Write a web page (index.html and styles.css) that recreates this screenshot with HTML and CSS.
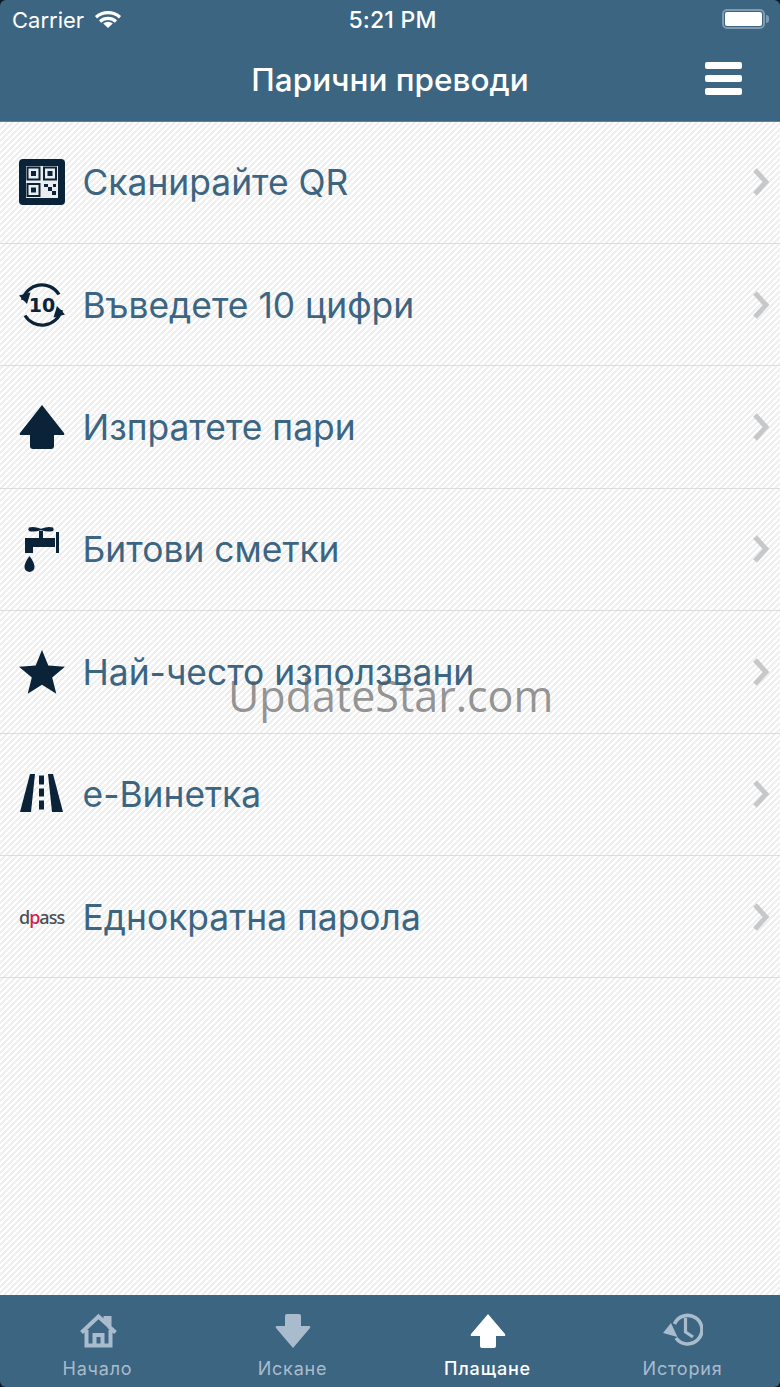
FILE: index.html
```html
<!DOCTYPE html>
<html lang="bg">
<head>
  <meta charset="UTF-8">
  <title>Парични преводи</title>
  <link rel="stylesheet" href="styles.css">
</head>
<body>

  <div class="app">
    <header class="top">
      <div class="status">
        <div class="status-left">
          <span>Carrier</span>
          <svg class="wifi" viewBox="0 0 28 20" width="28" height="20">
            <path d="M14 19 9.200 14.600a7 7 0 0 1 9.600 0z" fill="#fff"/>
            <path d="M2 8.200a18 18 0 0 1 24 0M6 12.500a12 12 0 0 1 16 0" fill="none" stroke="#fff" stroke-width="3.200"/>
          </svg>
        </div>
        <div class="status-time">5:21 PM</div>
        <div class="battery"><div class="battery-fill"></div></div>
      </div>
      <div class="nav">
        <h1>Парични преводи</h1>
        <div class="burger"><span></span><span></span><span></span></div>
      </div>
    </header>

    <main class="list">
      <a class="row">
        <svg class="icon" viewBox="0 0 46 46">
          <rect x="0" y="0" width="46" height="46" rx="4" fill="#0a2338"/>
          <rect x="7" y="7" width="32" height="32" fill="#e9edf0"/>
          <path d="M8.500 8.500h12v12h-12zM25 8.500h12v12H25zM8.500 25h12v12h-12z" fill="none" stroke="#0a2338" stroke-width="2"/>
          <path d="M12 12h5v5h-5zM28.500 12h5v5h-5zM12 28.500h5v5h-5zM25 25h4v3h-4zM29 28h4v4h-4zM33 32h4v4h-4zM34 25h3v3h-3z" fill="#0a2338"/>
        </svg>
        <span class="label">Сканирайте QR</span>
        <svg class="chev" viewBox="0 0 18 30"><path d="M3 3l11 12L3 27" fill="none" stroke="#c6c8ca" stroke-width="5"/></svg>
      </a>
      <a class="row">
        <svg class="icon" viewBox="0 0 46 46">
          <path d="M3.500 18A20 20 0 0 1 40 12.500M42.500 28A20 20 0 0 1 6 33.500" fill="none" stroke="#0a2338" stroke-width="3.200"/>
          <path d="M0 13.500l8 8.500 3.500-11.500zM46 32.500l-8-8.500-3.500 11.500z" fill="#0a2338"/>
          <text class="ten" x="23" y="30">10</text>
        </svg>
        <span class="label">Въведете 10 цифри</span>
        <svg class="chev" viewBox="0 0 18 30"><path d="M3 3l11 12L3 27" fill="none" stroke="#c6c8ca" stroke-width="5"/></svg>
      </a>
      <a class="row">
        <svg class="icon" viewBox="0 0 46 46">
          <path d="M23 1 45 29q1 2-1 2H35v11q0 3-3 3H14q-3 0-3-3V31H2q-2 0-1-2z" fill="#0a2338"/>
        </svg>
        <span class="label">Изпратете пари</span>
        <svg class="chev" viewBox="0 0 18 30"><path d="M3 3l11 12L3 27" fill="none" stroke="#c6c8ca" stroke-width="5"/></svg>
      </a>
      <a class="row">
        <svg class="icon" viewBox="0 0 46 46">
          <path d="M20 5h4v8h-4z" fill="#0a2338"/>
          <path d="M10 1.500q5-1.500 12 1.200 7-2.700 12-1.200 1.500 2 0 3.500-5 1.500-12-.800-7 2.300-12 .800-1.500-1.500 0-3.500z" fill="#0a2338"/>
          <path d="M6 12h30v9H14v6H6z" fill="#0a2338"/>
          <path d="M37 6h3v21h-3z" fill="#0a2338"/>
          <path d="M10.500 30q5 6.500 5 11a5 5 0 0 1-10 0q0-4.500 5-11z" fill="#0a2338"/>
        </svg>
        <span class="label">Битови сметки</span>
        <svg class="chev" viewBox="0 0 18 30"><path d="M3 3l11 12L3 27" fill="none" stroke="#c6c8ca" stroke-width="5"/></svg>
      </a>
      <a class="row">
        <svg class="icon" viewBox="0 0 46 46">
          <path d="M23 1l6.300 15.500 16.700 1.200-12.800 10.700 4.100 16.300L23 35.800 8.700 44.700l4.100-16.300L0 17.700l16.700-1.200z" fill="#0a2338"/>
        </svg>
        <span class="label">Най-често използвани</span>
        <svg class="chev" viewBox="0 0 18 30"><path d="M3 3l11 12L3 27" fill="none" stroke="#c6c8ca" stroke-width="5"/></svg>
      </a>
      <a class="row">
        <svg class="icon" viewBox="0 0 46 46">
          <path d="M11 3h5l-4 38H1zM29 3h5l10 38H33z" fill="#0a2338"/>
          <path d="M20 4.500h5v9h-5zM20 17.500h5v8h-5zM20 29.500h5v9h-5z" fill="#0a2338"/>
        </svg>
        <span class="label">е-Винетка</span>
        <svg class="chev" viewBox="0 0 18 30"><path d="M3 3l11 12L3 27" fill="none" stroke="#c6c8ca" stroke-width="5"/></svg>
      </a>
      <a class="row">
        <span class="dpass"><span class="dpass-d">d</span><span class="dpass-p">p</span>ass</span>
        <span class="label">Еднократна парола</span>
        <svg class="chev" viewBox="0 0 18 30"><path d="M3 3l11 12L3 27" fill="none" stroke="#c6c8ca" stroke-width="5"/></svg>
      </a>
    </main>

    <nav class="tabs">
      <div class="tab">
        <svg class="tab-icon" viewBox="0 0 40 36">
          <path d="M3.500 19.500 20.500 3.500l7 6.500V5h4v9l6 5.500M8.500 17v15.500h24V17M16.500 32V22h8v10" fill="none" stroke="#a9bccd" stroke-width="4"/>
        </svg>
        <span>Начало</span>
      </div>
      <div class="tab">
        <svg class="tab-icon" viewBox="0 0 40 36">
          <path d="M20 35 3 15q-1-2 1-2h8V3q0-2 2-2h12q2 0 2 2v10h8q2 0 1 2z" fill="#a9bccd"/>
        </svg>
        <span>Искане</span>
      </div>
      <div class="tab active">
        <svg class="tab-icon" viewBox="0 0 40 36">
          <path d="M20 1 37 21q1 2-1 2h-8v10q0 2-2 2H14q-2 0-2-2V23H4q-2 0-1-2z" fill="#fff"/>
        </svg>
        <span>Плащане</span>
      </div>
      <div class="tab">
        <svg class="tab-icon" viewBox="0 0 40 36">
          <path d="M11.500 11A14.300 14.300 0 1 1 13 25" fill="none" stroke="#a9bccd" stroke-width="3.600"/>
          <path d="M0 20l8-10 6.500 14z" fill="#a9bccd"/>
          <path d="M22.500 5v14l7.500 5" fill="none" stroke="#a9bccd" stroke-width="3.200"/>
        </svg>
        <span>История</span>
      </div>
    </nav>

    <div class="watermark">UpdateStar.com</div>
  </div>

</body>
</html>
```

FILE: styles.css
```css
body { margin: 0; font-family: Inter, "Noto Sans", sans-serif; background: #0b1a24; }
.app { position: relative; width: 780px; height: 1387px; display: flex; flex-direction: column; overflow: hidden; border-radius: 6px; }

.top { background: #3c6582; color: #fff; height: 121.600px; box-sizing: border-box; flex: none; border-bottom: 1px solid #5f8097; }
.status { height: 40px; display: flex; align-items: center; justify-content: space-between; padding: 0 15px 0 12px; position: relative; font-size: 22px; }
.status-left { display: flex; align-items: center; gap: 10px; }
.wifi { margin-top: -3px; }
.status-time { position: absolute; left: 5px; right: 0; text-align: center; font-size: 23px; font-weight: 500; letter-spacing: 0.2px; }
.battery { position: relative; width: 43px; height: 20px; box-sizing: border-box; border: 2px solid #7f9bb0; border-radius: 5px; padding: 1px; margin-top: -2px; }
.battery::after { content: ""; position: absolute; right: -6px; top: 4px; width: 3px; height: 8px; background: #7f9bb0; border-radius: 0 3px 3px 0; }
.battery-fill { height: 100%; background: #fff; border-radius: 2px; }
.nav { height: 80px; display: flex; align-items: center; justify-content: center; position: relative; }
.nav h1 { margin: 0 0 2px; font-size: 31.500px; font-weight: 500; }
.burger { position: absolute; right: 38px; top: 22px; width: 37px; display: flex; flex-direction: column; gap: 6.500px; }
.burger span { height: 6.500px; background: #fff; border-radius: 2px; }

.list { flex: 1; display: flex; flex-direction: column; background-color: #fff; background-image: linear-gradient(135deg, #efefef 25%, transparent 25%, transparent 50%, #efefef 50%, #efefef 75%, transparent 75%); background-size: 6px 6px; }
.row { flex: 0 0 122.400px; box-sizing: border-box; display: flex; align-items: center; padding: 0 10px 0 19px; border-bottom: 1px solid #dcdcdc; }
.icon { width: 46px; height: 46px; flex: none; }
.ten { font-family: "DejaVu Sans", sans-serif; font-size: 19px; font-weight: 700; fill: #0a2338; text-anchor: middle; }
.label { margin-left: 17.500px; padding-top: 1px; font-size: 35.400px; color: #3c6582; flex: 1; }
.chev { width: 18px; height: 30px; flex: none; }
.dpass { width: 46px; flex: none; font-family: "Noto Sans", sans-serif; font-size: 18px; font-weight: 500; color: #4a4f54; letter-spacing: -1px; }
.dpass-p { color: #d0234a; }

.tabs { height: 92px; flex: none; display: grid; grid-template-columns: repeat(4, 1fr); background: #3c6582; }
.tab { display: flex; flex-direction: column; align-items: center; padding-top: 18px; color: #a9bccd; font-size: 18px; letter-spacing: 0.8px; }
.tab span { margin-top: 9px; }
.tab.active { color: #fff; font-weight: 500; }
.tab-icon { width: 40px; height: 36px; }

.watermark { position: absolute; left: 228px; top: 666px; font-family: "Open Sans", sans-serif; font-size: 43px; color: rgba(90,90,90,0.65); }
```
